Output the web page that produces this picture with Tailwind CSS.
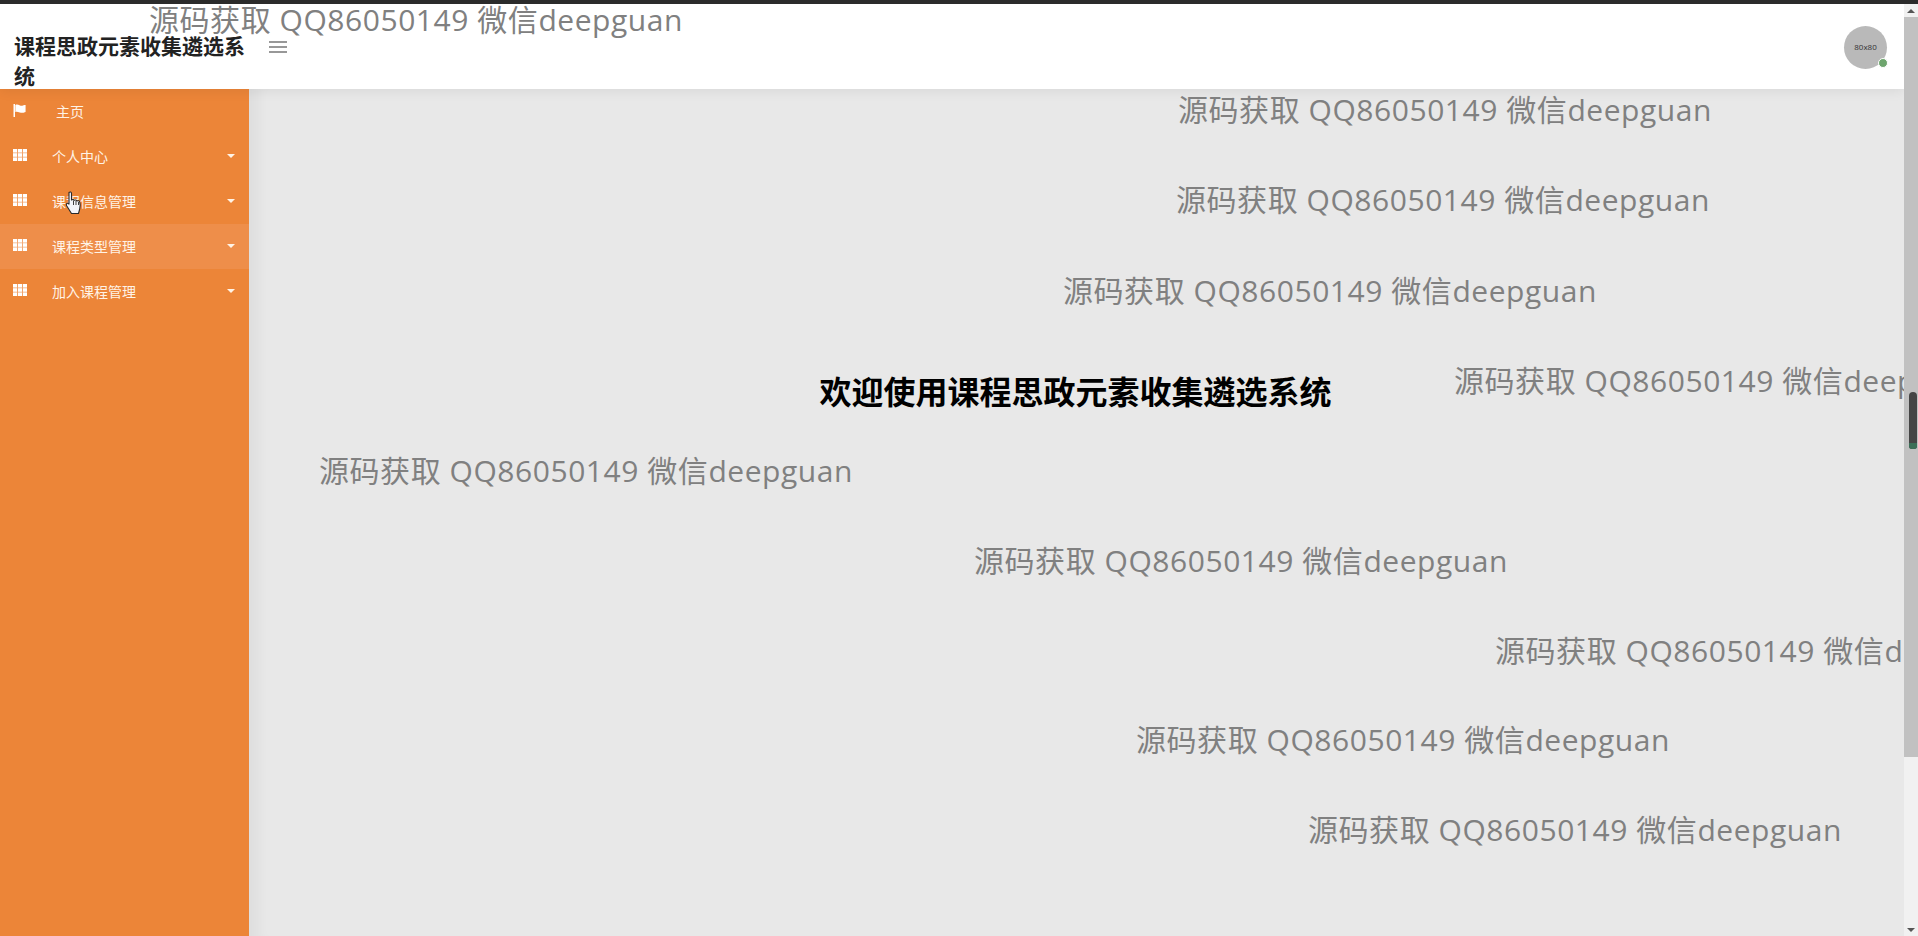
<!DOCTYPE html>
<html lang="zh-CN">
<head>
  <meta charset="UTF-8">
  <meta name="viewport" content="width=device-width, initial-scale=1.0">
  <title>课程思政元素收集遴选系统</title>
  <script src="https://cdn.jsdelivr.net/npm/@tailwindcss/browser@4"></script>
</head>
<body class="h-[936px] w-[1918px] overflow-hidden bg-[#e8e8e8] font-['Open_Sans','Noto_Sans_CJK_SC',sans-serif]">
  <div class="relative flex h-full w-full flex-col">
    <div class="h-[4px] shrink-0 bg-[#2b2b2b]"></div>

    <div class="flex min-h-0 flex-1">
      <!-- page -->
      <div class="relative flex w-[1904px] flex-col overflow-hidden">
        <header class="relative z-10 flex h-[85px] shrink-0 items-center bg-white shadow-[0_2px_12px_rgba(0,0,0,0.07)]">
          <div class="w-[249px] shrink-0 pl-[14px] pt-[27px] text-[21px] leading-[30px] font-bold text-[#222]">
            <div class="w-[232px] font-['Noto_Sans_CJK_SC',sans-serif]">课程思政元素收集遴选系统</div>
          </div>
          <svg class="ml-[20px] mt-[1px] h-[12px] w-[18px] text-[#777]" viewBox="0 0 18 12" fill="none" stroke="currentColor" stroke-width="1.6">
            <path d="M0 1h18M0 6h18M0 11h18"/>
          </svg>
          <div class="relative ml-auto mr-[17px] mt-[1px] flex h-[43px] w-[43px] items-center justify-center rounded-full bg-[#b9b9b9] text-[8px] text-[#333]">
            80x80
            <span class="absolute right-[-1px] bottom-[1px] h-[8px] w-[8px] rounded-full border border-white bg-[#6ea56e] box-content"></span>
          </div>
        </header>

        <div class="flex min-h-0 flex-1">
          <aside class="w-[249px] shrink-0 bg-[#ec8538] text-[14px] text-[#fff3e6]">
            <a class="flex h-[45px] items-center pl-[13px]">
              <svg class="mb-[2px] h-[13px] w-[14px] fill-white" viewBox="0 0 14 14"><path d="M0 0h1.6v14H0zM2 1c3-1.200 4 .8 6 .8 2 0 4-.8 5-.8v7.500c-1 .5-3 1-5 1-2 0-3-1.600-6-.8z"/></svg>
              <span class="ml-[29px]">主页</span>
            </a>
            <a class="flex h-[45px] items-center pl-[13px]">
              <svg class="mb-[3px] h-[12px] w-[14px] fill-white" viewBox="0 0 14 12"><path d="M0 0h14v12H0z" fill-opacity="0.25"/><path d="M0 0h4v3.400H0zM5 0h4v3.400H5zM10 0h4v3.400h-4zM0 4.300h4v3.400H0zM5 4.300h4v3.400H5zM10 4.300h4v3.400h-4zM0 8.600h4V12H0zM5 8.600h4V12H5zM10 8.600h4V12h-4z"/></svg>
              <span class="ml-[25px]">个人中心</span>
              <span class="ml-auto mr-[14px] mb-[2px] h-0 w-0 border-x-[4px] border-t-[4px] border-x-transparent border-t-[#fff3e6]"></span>
            </a>
            <a class="flex h-[45px] items-center pl-[13px]">
              <svg class="mb-[3px] h-[12px] w-[14px] fill-white" viewBox="0 0 14 12"><path d="M0 0h14v12H0z" fill-opacity="0.25"/><path d="M0 0h4v3.400H0zM5 0h4v3.400H5zM10 0h4v3.400h-4zM0 4.300h4v3.400H0zM5 4.300h4v3.400H5zM10 4.300h4v3.400h-4zM0 8.600h4V12H0zM5 8.600h4V12H5zM10 8.600h4V12h-4z"/></svg>
              <span class="ml-[25px]">课程信息管理</span>
              <span class="ml-auto mr-[14px] mb-[2px] h-0 w-0 border-x-[4px] border-t-[4px] border-x-transparent border-t-[#fff3e6]"></span>
            </a>
            <a class="flex h-[45px] items-center bg-[#ee8e4a] pl-[13px]">
              <svg class="mb-[3px] h-[12px] w-[14px] fill-white" viewBox="0 0 14 12"><path d="M0 0h14v12H0z" fill-opacity="0.25"/><path d="M0 0h4v3.400H0zM5 0h4v3.400H5zM10 0h4v3.400h-4zM0 4.300h4v3.400H0zM5 4.300h4v3.400H5zM10 4.300h4v3.400h-4zM0 8.600h4V12H0zM5 8.600h4V12H5zM10 8.600h4V12h-4z"/></svg>
              <span class="ml-[25px]">课程类型管理</span>
              <span class="ml-auto mr-[14px] mb-[2px] h-0 w-0 border-x-[4px] border-t-[4px] border-x-transparent border-t-[#fff3e6]"></span>
            </a>
            <a class="flex h-[45px] items-center pl-[13px]">
              <svg class="mb-[3px] h-[12px] w-[14px] fill-white" viewBox="0 0 14 12"><path d="M0 0h14v12H0z" fill-opacity="0.25"/><path d="M0 0h4v3.400H0zM5 0h4v3.400H5zM10 0h4v3.400h-4zM0 4.300h4v3.400H0zM5 4.300h4v3.400H5zM10 4.300h4v3.400h-4zM0 8.600h4V12H0zM5 8.600h4V12H5zM10 8.600h4V12h-4z"/></svg>
              <span class="ml-[25px]">加入课程管理</span>
              <span class="ml-auto mr-[14px] mb-[2px] h-0 w-0 border-x-[4px] border-t-[4px] border-x-transparent border-t-[#fff3e6]"></span>
            </a>
          </aside>
          <main class="min-w-0 flex-1 bg-[#e8e8e8] pt-[279px] pr-[2px] text-center shadow-[inset_18px_0_12px_-8px_rgba(0,0,0,0.04)]">
            <h1 class="font-['Noto_Sans_CJK_SC',sans-serif] text-[32px] leading-[44px] font-bold text-black">欢迎使用课程思政元素收集遴选系统</h1>
          </main>
        </div>

        <!-- watermarks lying over the page -->
        <div class="pointer-events-none absolute inset-0 z-20 text-[30px] leading-[40px] tracking-[0.55px] whitespace-nowrap text-[#808080]">
          <span class="absolute left-[149px] top-[-4px]">源码获取 QQ86050149 微信deepguan</span>
          <span class="absolute left-[1178px] top-[86px]">源码获取 QQ86050149 微信deepguan</span>
          <span class="absolute left-[1176px] top-[176px]">源码获取 QQ86050149 微信deepguan</span>
          <span class="absolute left-[1063px] top-[267px]">源码获取 QQ86050149 微信deepguan</span>
          <span class="absolute left-[1454px] top-[357px]">源码获取 QQ86050149 微信deepguan</span>
          <span class="absolute left-[319px] top-[447px]">源码获取 QQ86050149 微信deepguan</span>
          <span class="absolute left-[974px] top-[537px]">源码获取 QQ86050149 微信deepguan</span>
          <span class="absolute left-[1495px] top-[627px]">源码获取 QQ86050149 微信deepguan</span>
          <span class="absolute left-[1136px] top-[716px]">源码获取 QQ86050149 微信deepguan</span>
          <span class="absolute left-[1308px] top-[806px]">源码获取 QQ86050149 微信deepguan</span>
        </div>

        <!-- mouse pointer from the capture -->
        <svg class="absolute left-[65px] top-[187px] z-30 h-[24px] w-[18px]" viewBox="0 0 18 24">
          <path d="M4 1.500c1-1 2.500-.5 2.500 1V9c1-.8 2.200-.6 2.800.3 1-.6 2.200-.3 2.700.6 1-.5 2.300 0 2.700 1 .5 1.500.6 5 0 7.100L13.500 22.500H6.500L1.800 15c-.7-1.200-.6-2.200.2-2.600.8-.4 1.500 0 2 .7V2.500z" fill="#f4f5fa" stroke="#2a2a2a" stroke-width="1.100" stroke-linejoin="round"/>
          <path d="M8.500 9.500V14M11 10v4M13.500 11v3" stroke="#2a2a2a" stroke-width="0.900" fill="none"/>
        </svg>
      </div>

      <!-- page scrollbar -->
      <div class="relative flex w-[14px] shrink-0 flex-col bg-[#f1f1f1]">
        <div class="flex h-[13px] shrink-0 items-center justify-center">
          <span class="h-0 w-0 border-x-[4px] border-b-[4px] border-x-transparent border-b-[#555]"></span>
        </div>
        <div class="h-[740px] shrink-0 bg-[#c1c1c1]"></div>
        <div class="mt-auto flex h-[13px] shrink-0 items-center justify-center">
          <span class="h-0 w-0 border-x-[4px] border-t-[4px] border-x-transparent border-t-[#555]"></span>
        </div>
        <div class="absolute left-[5px] top-[388px] h-[57px] w-[8px] rounded-t-[4px] rounded-b-[3px] bg-[#454545]">
          <div class="absolute bottom-0 h-[6px] w-full rounded-b-[3px] bg-[#3c6f57]"></div>
        </div>
      </div>
    </div>
  </div>
</body>
</html>
